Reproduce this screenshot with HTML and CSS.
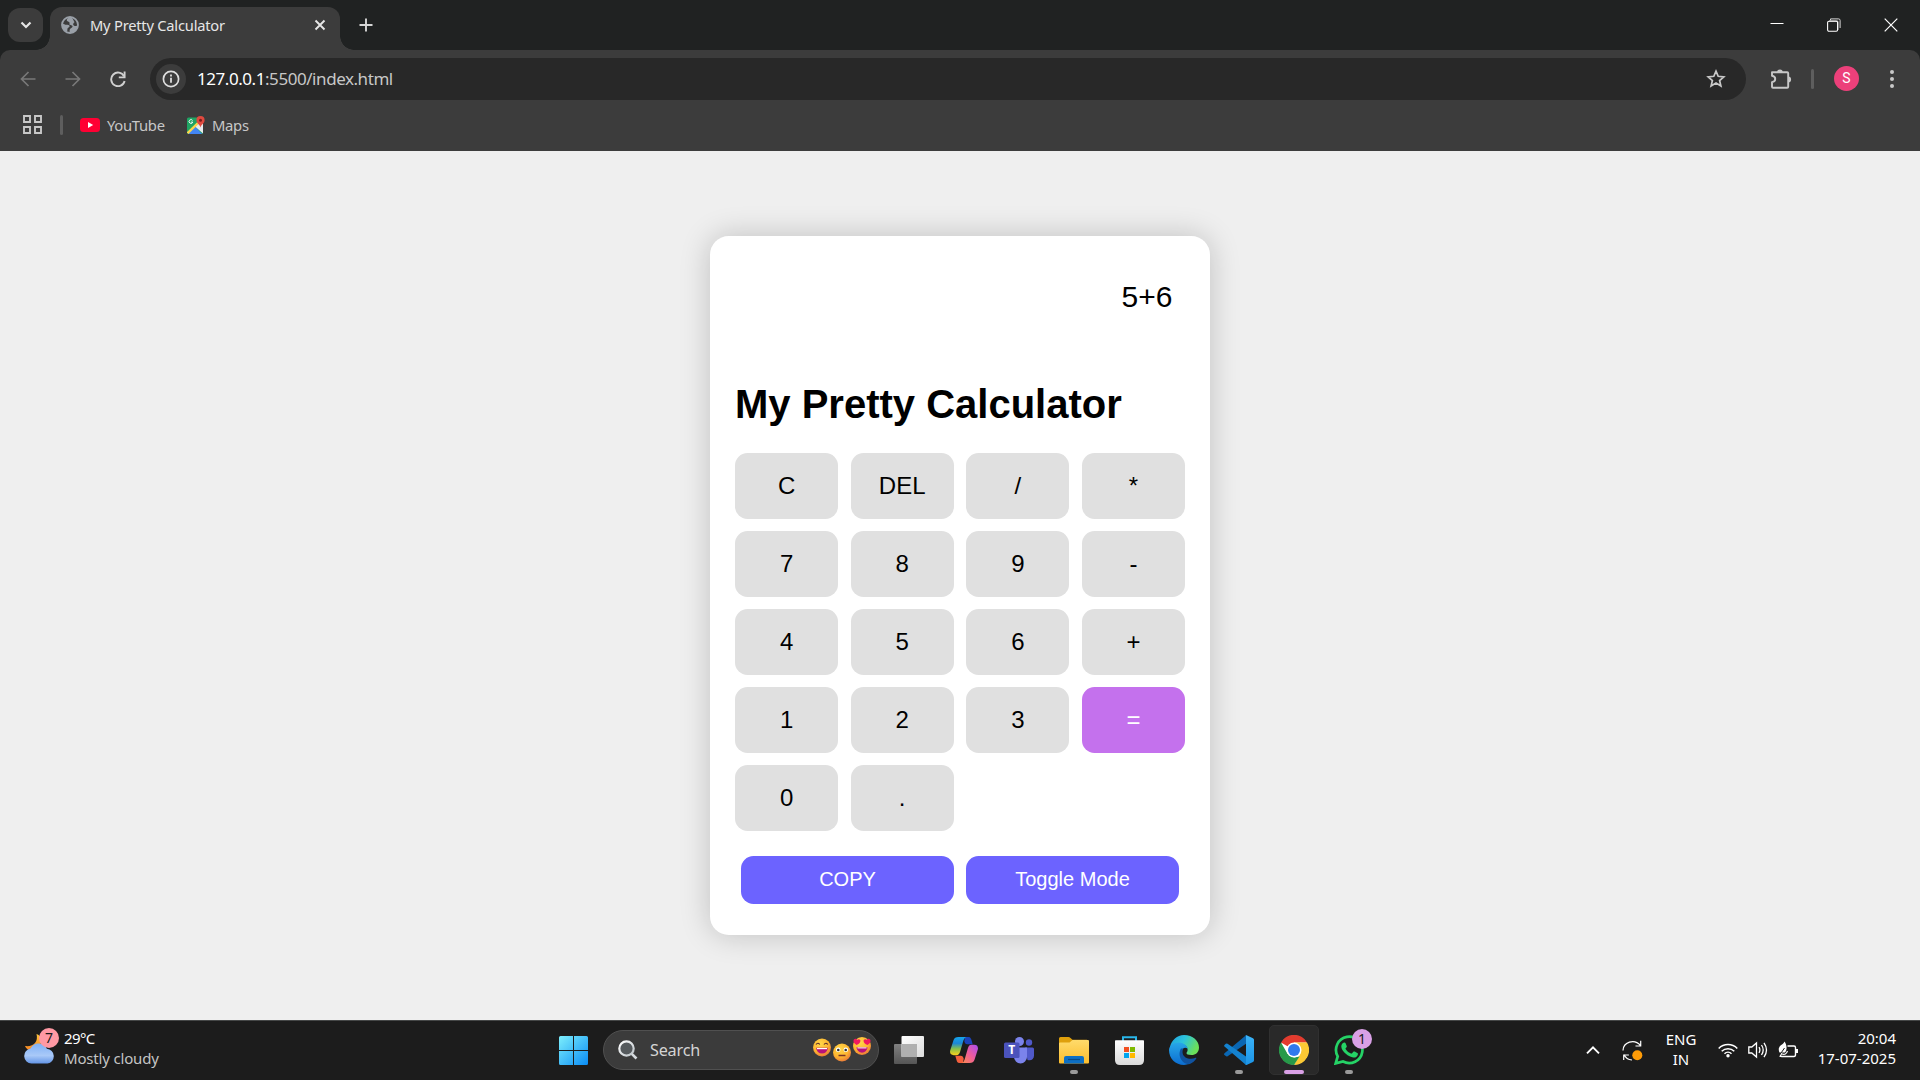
FILE: index.html
```html
<!DOCTYPE html>
<html lang="en">
<head>
<meta charset="utf-8">
<title>My Pretty Calculator</title>
<link rel="stylesheet" href="styles.css">
</head>
<body>
<svg class="defs" width="0" height="0" aria-hidden="true">
  <defs>
    <linearGradient id="g-win" x1="0" y1="0" x2="1" y2="1"><stop offset="0" stop-color="#7deffc"/><stop offset="1" stop-color="#0a8cf5"/></linearGradient>
    <linearGradient id="g-moon" x1="0" y1="0" x2="0" y2="1"><stop offset="0" stop-color="#ffc63c"/><stop offset="1" stop-color="#f58220"/></linearGradient>
    <linearGradient id="g-cloud" x1="0" y1="0" x2="0" y2="1"><stop offset="0" stop-color="#7fb0f5"/><stop offset=".6" stop-color="#a9c9f8"/><stop offset="1" stop-color="#6495e6"/></linearGradient>
    <radialGradient id="g-face" cx=".4" cy=".3" r=".75"><stop offset="0" stop-color="#ffd84a"/><stop offset=".6" stop-color="#fdb52f"/><stop offset="1" stop-color="#e8743b"/></radialGradient>
    <linearGradient id="g-tv1" x1="0" y1="0" x2="1" y2="1"><stop offset="0" stop-color="#fff"/><stop offset="1" stop-color="#dcdcdc"/></linearGradient>
    <linearGradient id="g-tv2" x1="0" y1="0" x2="0" y2="1"><stop offset="0" stop-color="#808080"/><stop offset="1" stop-color="#555"/></linearGradient>
    <linearGradient id="g-cop1" x1="0" y1="0" x2="0" y2="1"><stop offset="0" stop-color="#16a5ec"/><stop offset=".35" stop-color="#1b86d6"/><stop offset=".65" stop-color="#86c04a"/><stop offset="1" stop-color="#fbd21c"/></linearGradient>
    <linearGradient id="g-cop2" x1="1" y1="0" x2="0" y2="1"><stop offset="0" stop-color="#a94df2"/><stop offset=".5" stop-color="#ee5c9c"/><stop offset="1" stop-color="#fd8b4a"/></linearGradient>
    <linearGradient id="g-fold" x1="0" y1="0" x2="0" y2="1"><stop offset="0" stop-color="#ffdb6b"/><stop offset="1" stop-color="#fbbd2e"/></linearGradient>
    <linearGradient id="g-store" x1="0" y1="0" x2="0" y2="1"><stop offset="0" stop-color="#fff"/><stop offset="1" stop-color="#dadada"/></linearGradient>
    <linearGradient id="g-edge1" x1="0" y1="0" x2="1" y2=".4"><stop offset="0" stop-color="#1f9fe0"/><stop offset=".5" stop-color="#2cc3dc"/><stop offset="1" stop-color="#6be05a"/></linearGradient>
    <linearGradient id="g-edge2" x1="0" y1="0" x2="0" y2="1"><stop offset="0" stop-color="#27a7e8"/><stop offset="1" stop-color="#0c6dd0"/></linearGradient>
    <linearGradient id="g-vs" x1="0" y1="0" x2="0" y2="1"><stop offset="0" stop-color="#3bb4f8"/><stop offset="1" stop-color="#1c94e6"/></linearGradient>
    <linearGradient id="g-lens" x1="0" y1="0" x2="1" y2="1"><stop offset="0" stop-color="#fff"/><stop offset="1" stop-color="#bcc3c8"/></linearGradient>
  </defs>
</svg>

<div class="screen">
  <header class="browser">
    <div class="tabstrip">
      <div class="tab-search"><svg width="12" height="8" viewBox="0 0 12 8"><path d="M1.5 1.5 6 6l4.500-4.500" fill="none" stroke="#e6e6e6" stroke-width="2.200"/></svg></div>
      <div class="tab">
        <svg class="favicon" width="18" height="18" viewBox="0 0 18 18"><circle cx="9" cy="9" r="8" fill="#3c3c3c" stroke="#9aa0a8" stroke-width="1.800"/><path d="M1 8c1.500-.2 3 .6 4.200.8 1.600.2 3.400 0 3.400 1.400 0 1-1 1.200-1.700 1.700-.8.600-.2 1.700-.8 3.900C3 14.800.8 12 1 8zM9.500 1C7.500 1.600 5.800 2.700 5.700 4c0 1.600 2.600 1.400 2.900 2.700.2.700-.3 1-.3 1.500 0 .8 2.700.6 3.200 1.900.4 1.300-1 1.900-2 2.500-1 .7-1 2-.8 4.400 4.400.3 8-3.400 8.300-7.400-1.500.6-3 .8-4.200-.1-1.500-1.200-.2-2.600.9-3.500C12.500 5.500 12.500 2 9.500 1z" fill="#9aa0a8"/></svg>
        <span class="tab-title">My Pretty Calculator</span>
        <svg class="tab-close" width="12" height="12" viewBox="0 0 12 12"><path d="M1.500 1.500l9 9m0-9l-9 9" stroke="#e6e6e6" stroke-width="1.900"/></svg>
      </div>
      <svg class="new-tab" width="14" height="14" viewBox="0 0 14 14"><path d="M7 .5v13M.5 7h13" stroke="#d6d6d6" stroke-width="1.900"/></svg>
      <div class="window-buttons">
        <svg width="14" height="14" viewBox="0 0 14 14"><path d="M.5 5.500h13" stroke="#fff"/></svg>
        <svg width="14" height="14" viewBox="0 0 14 14"><path d="M3.500 2.500V.9h8.100q1.500 0 1.500 1.500v7.600" fill="none" stroke="#d8d8d8"/><path d="M2 3h7.800q1 0 1 1v8" fill="none" stroke="#949494" stroke-width="1.500"/><rect x=".6" y="3.200" width="10" height="10" rx="1.400" fill="none" stroke="#fff" stroke-width="1.100"/></svg>
        <svg width="14" height="14" viewBox="0 0 14 14"><path d="M.7.7l12.600 12.600m0-12.600L.7 13.300" stroke="#fff" stroke-width="1.200"/></svg>
      </div>
    </div>

    <div class="toolbar">
      <nav class="nav">
        <svg width="16" height="16" viewBox="0 0 16 16"><path d="M15.500 8H2M8.500 1L1.500 8l7 7" fill="none" stroke="#787878" stroke-width="1.700"/></svg>
        <svg width="16" height="16" viewBox="0 0 16 16"><path d="M.5 8H14M7.500 1l7 7-7 7" fill="none" stroke="#787878" stroke-width="1.700"/></svg>
        <svg width="16" height="16" viewBox="0 0 16 16"><path d="M14 5.200A6.800 6.800 0 1 0 14.600 10" fill="none" stroke="#d0d0d0" stroke-width="1.900"/><path d="M14.600.5v5.900H8.800" fill="none" stroke="#d0d0d0" stroke-width="1.900"/></svg>
      </nav>
      <div class="omnibox">
        <span class="site-info"><svg width="18" height="18" viewBox="0 0 18 18"><circle cx="9" cy="9" r="7.600" fill="none" stroke="#dedede" stroke-width="1.700"/><path d="M9 7.800v5M9 4.600v1.900" stroke="#dedede" stroke-width="1.800"/></svg></span>
        <span class="url"><b>127.0.0.1</b>:5500/index.html</span>
        <svg class="star" width="20" height="20" viewBox="0 0 20 20"><path d="M10 2.200l2.200 5.100 5.600.5-4.200 3.700 1.300 5.500-4.900-2.900L5.100 17l1.300-5.500-4.200-3.700 5.600-.5z" fill="none" stroke="#c8c8c8" stroke-width="1.700"/></svg>
      </div>
      <svg class="puzzle" width="22" height="22" viewBox="0 0 22 22"><path d="M2 4.300h15.200q1 0 1 1v13.500q0 1-1 1H3q-1 0-1-1v-4.700c4.300-.8 4.300-5.500 0-6.300V4.300z" fill="none" stroke="#c8c8c8" stroke-width="1.900" stroke-linejoin="round"/><path d="M7 4.300a2.900 2.900 0 0 1 5.800 0zM18.200 8.600a2.900 2.900 0 0 1 0 5.800z" fill="#c8c8c8"/></svg>
      <span class="divider"></span>
      <span class="avatar">S</span>
      <svg class="menu" width="4" height="18" viewBox="0 0 4 18"><g fill="#c8c8c8"><circle cx="2" cy="2" r="2"/><circle cx="2" cy="9" r="2"/><circle cx="2" cy="16" r="2"/></g></svg>
    </div>

    <div class="bookmarks">
      <svg width="19" height="19" viewBox="0 0 19 19"><path d="M1 1h6v6H1zM12 1h6v6h-6zM1 12h6v6H1zM12 12h6v6h-6z" fill="none" stroke="#c8c8c8" stroke-width="1.900"/></svg>
      <span class="divider"></span>
      <span class="bookmark"><svg width="20" height="14" viewBox="0 0 20 14"><rect width="20" height="14" rx="3.500" fill="#ff0033"/><path d="M8 4l5.200 3L8 10z" fill="#fff"/></svg><span class="label-yt">YouTube</span></span>
      <span class="bookmark maps"><svg width="18" height="18" viewBox="0 0 18 18"><rect y="1.500" width="16" height="16.500" rx="1.500" fill="#1fa463"/><path d="M1 18l7-7.500 7 7.500z" fill="#4285f4"/><path d="M8 10.500L16 3v14.500z" fill="#e8eaed"/><path d="M.6 17.200L12 6" stroke="#fbd64b" stroke-width="2.400"/><path d="M5.600 4.500a1.900 1.900 0 1 0 .2 1.600H4" fill="none" stroke="#fff" stroke-width=".9"/><path d="M13.500 11.500C12.500 8 9.400 7.300 9.400 4.200a4.100 4.100 0 0 1 8.200 0c0 3.100-3.100 3.800-4.100 7.300z" fill="#e04a3f"/><circle cx="13.500" cy="4.200" r="1.500" fill="#7b1d1d"/></svg><span class="label-maps">Maps</span></span>
    </div>
  </header>

  <main class="page">
    <section class="calculator">
      <output class="display">5+6</output>
      <h1>My Pretty Calculator</h1>
      <div class="keys">
        <button>C</button><button>DEL</button><button>/</button><button>*</button>
        <button>7</button><button>8</button><button>9</button><button>-</button>
        <button>4</button><button>5</button><button>6</button><button>+</button>
        <button>1</button><button>2</button><button>3</button><button class="equals">=</button>
        <button>0</button><button>.</button>
      </div>
      <div class="actions"><button>COPY</button><button>Toggle Mode</button></div>
    </section>
  </main>

  <footer class="taskbar">
    <div class="weather">
      <div class="weather-icon">
        <svg width="34" height="37" viewBox="0 0 34 37"><path d="M12.500 6c2 8-3 13-11.500 12 1 3 4 5 8 4.500 6-1 9-6 8-12-.5-2-2-4-4.500-4.500z" fill="url(#g-moon)"/><path d="M7.500 35.500a7.500 7.500 0 0 1-1-14.900 9 9 0 0 1 16.400.2 7.400 7.400 0 0 1 .6 14.700z" fill="url(#g-cloud)"/></svg>
        <span class="badge pink">7</span>
      </div>
      <div class="weather-text"><span class="temp">29°C</span><span class="sky">Mostly cloudy</span></div>
    </div>

    <div class="apps">
      <div class="app"><svg width="29" height="29" viewBox="0 0 29 29"><path d="M0 1.500Q0 0 1.500 0H14v14H0zM15 0h12.500Q29 0 29 1.500V14H15zM0 15h14v14H1.500Q0 29 0 27.500zM15 15h14v12.500q0 1.500-1.500 1.500H15z" fill="url(#g-win)"/></svg></div>
      <div class="search">
        <svg width="20" height="20" viewBox="0 0 20 20"><circle cx="8.500" cy="8.500" r="7.200" fill="#555a5d" stroke="url(#g-lens)" stroke-width="2.200"/><path d="M13.800 13.800l4.700 4.700" stroke="#d5dade" stroke-width="2.600"/></svg>
        <span class="search-label">Search</span>
        <svg class="faces" width="60" height="26" viewBox="0 0 60 26">
          <circle cx="10" cy="10.500" r="9" fill="url(#g-face)"/><path d="M4 7.500q1.800-2.500 3.800 0M12 7.500q1.800-2.500 3.800 0" fill="none" stroke="#5b2b2b" stroke-width="1.200"/><path d="M4.200 10.800h11.600a5.800 5.800 0 0 1-11.600 0z" fill="#b8127b"/><path d="M5 11h10v1.200H5z" fill="#fff"/>
          <circle cx="30" cy="15.500" r="9" fill="url(#g-face)"/><circle cx="26.200" cy="12.800" r="2.300" fill="#fff"/><circle cx="33.800" cy="12.800" r="2.300" fill="#fff"/><circle cx="26.300" cy="13" r="1.300" fill="#333"/><circle cx="33.700" cy="13" r="1.300" fill="#333"/><path d="M26.500 18.500h7" stroke="#7a3325" stroke-width="1.500"/>
          <circle cx="50" cy="9" r="9" fill="url(#g-face)"/><path d="M44.500 8C41.500 6 41 4.300 41.700 2.800c1-1.800 3-1.300 3.400.2 1-1.200 3.100-.8 3.300.8.200 1.800-1.600 3.400-3.900 4.200zM55.500 8c3-2 3.500-3.700 2.800-5.200-1-1.800-3-1.300-3.400.2-1-1.200-3.100-.8-3.300.8-.2 1.800 1.600 3.400 3.900 4.200z" fill="#f0195f"/><path d="M44.500 10.200h11a5.500 5.500 0 0 1-11 0z" fill="#b8127b"/><path d="M45.500 10.400h9v1h-9z" fill="#fff"/>
        </svg>
      </div>
      <div class="app"><svg width="30" height="28" viewBox="0 0 30 28"><rect y="8" width="23" height="20" rx="1" fill="url(#g-tv2)"/><rect x="7.500" y="0" width="22.500" height="21" rx="1" fill="url(#g-tv1)"/><path d="M7.500 8H23v13H7.500z" fill="#b0b0b0"/></svg></div>
      <div class="app"><svg width="28" height="26" viewBox="0 0 28 26"><path d="M15 0h3.500c2.200 0 2.600 1.800 3.200 3.800l1 3.400h-5.400c-1.800 0-2.500-1.200-3-3z" fill="#1b43b8"/><path d="M8.500 0h8c-2 .4-2.800 2.500-3.400 4.600l-3 10.200c-.7 2.300-1.700 3.400-3.800 3.400H3.800C1 18.200-.5 16.500.2 13.500L3.500 3.300C4.300 1 5.700 0 8.500 0z" fill="url(#g-cop1)"/><path d="M13 26H9.500c-2.200 0-2.600-1.800-3.200-3.800l-1-3.400h5.400c1.800 0 2.500 1.200 3 3z" fill="#f35f3d"/><path d="M19.500 26h-8c2-.4 2.800-2.500 3.400-4.600l3-10.200c.7-2.300 1.700-3.400 3.800-3.400h2.500c2.800 0 4.300 1.700 3.600 4.700l-3.300 10.200c-.8 2.300-2.200 3.300-5 3.300z" fill="url(#g-cop2)"/></svg></div>
      <div class="app"><svg width="30" height="27" viewBox="0 0 30 27"><circle cx="25" cy="5.500" r="3.200" fill="#5059c9"/><path d="M21 10.500h7.500q1.500 0 1.500 1.500v6.500c0 4-3 5.500-6.500 4.500z" fill="#5059c9"/><circle cx="15.500" cy="4.500" r="4.500" fill="#7b83eb"/><path d="M10 10.500h13v9.500a6.500 6.500 0 0 1-13 0z" fill="#7b83eb"/><rect y="5.500" width="15.500" height="15.500" rx="1.500" fill="#4b53bc"/><text x="7.700" y="17.300" class="teams-t">T</text></svg></div>
      <div class="app running"><svg width="30" height="27" viewBox="0 0 30 27"><path d="M0 1.500Q0 0 1.500 0h8q1 0 2 1l2 1.800H28L30 6v5H0z" fill="#dfa00c"/><path d="M0 6.500Q0 5.500 1 5.500h9.500l3-2.500H29q1 0 1 1v21.500q0 1-1 1H1q-1 0-1-1z" fill="url(#g-fold)"/><path d="M5 26.500V21q0-2 2-2h16q2 0 2 2v5.500z" fill="#0d6fc4"/><path d="M9 22.500h12" stroke="#084a88" stroke-width="1.200"/></svg></div>
      <div class="app"><svg width="29" height="29" viewBox="0 0 29 29"><path d="M8 6V1.200h13V6" fill="none" stroke="#29b6ea" stroke-width="2"/><path d="M0 5q0-.7.700-.7h27.600q.7 0 .7.700v19q0 5-5 5H5q-5 0-5-5z" fill="url(#g-store)"/><path d="M9 11h5v5H9z" fill="#f25022"/><path d="M15 11h5v5h-5z" fill="#7fba00"/><path d="M9 17h5v5H9z" fill="#00a4ef"/><path d="M15 17h5v5h-5z" fill="#ffb900"/></svg></div>
      <div class="app"><svg width="30" height="30" viewBox="0 0 30 30"><path d="M1 12C2.500 5 8 0 15 0c9 0 15 6 15 12.500 0 5-3.500 7.500-7.500 7.500-3.500 0-5.300-1-5-2.300.3-.8 1.500-1.500 1-4C18 11 15 9 11 9c-5 0-8.500 2-10 5z" fill="url(#g-edge1)"/><path d="M0 15c0-4.500 4.500-7.500 9.500-7.500 5 0 9 3 9.200 6.500-2-2.500-6.200-1-6.200 3.500 0 6 7 9.500 12.500 8A15 15 0 0 1 15 30C6.500 30 0 23.500 0 15z" fill="url(#g-edge2)"/><path d="M12 13.500c-4 7 1 15.500 8 15.700 3-1 6-3.200 7.300-5.800.3-.6-.3-.9-.8-.6-5.500 2.500-11.800.2-12.800-4.300-.4-1.800 0-3.700.7-5z" fill="#1053a0"/></svg></div>
      <div class="app running"><svg width="30" height="30" viewBox="0 0 30 30"><path d="M.5 18.300L22 .2V8.700L3.600 21.200q-1 .7-1.800-.1L.5 20q-.9-.9 0-1.700z" fill="#0a67b3"/><path d="M.5 11.500q-.8-.8 0-1.600l1.300-1.100q.8-.7 1.800 0L22 21.500V30z" fill="#1482cf"/><path d="M21.500.2Q22 0 22.500.2L29 3.200q1 .5 1 1.600v20.500q0 1.100-1 1.600L22.500 30q-.7.200-1.200-.3.700.3.700-.7V1q0-1-.5-.8z" fill="url(#g-vs)"/></svg></div>
      <div class="app active"><svg width="30" height="30" viewBox="0 0 30 30"><circle cx="15" cy="15" r="14.500" fill="#fff"/><path d="M15 15L2 7.500A15 15 0 0 1 28 7.500H15z" fill="#e33b2e"/><path d="M15 7.500h13A15 15 0 0 1 15 30l6.500-11.200z" fill="#fcc934"/><path d="M2 7.500l6.500 11.300L15 22.500l5.500-1L15 30A15 15 0 0 1 2 7.500z" fill="#279a49"/><circle cx="15" cy="15" r="7.500" fill="#fff"/><circle cx="15" cy="15" r="6" fill="#3079ed"/></svg></div>
      <div class="app running whatsapp"><svg width="30" height="30" viewBox="0 0 30 30"><path d="M1.700 28.400l2-7.100A13.200 13.200 0 1 1 9 26.500z" fill="none" stroke="#25d366" stroke-width="2.700"/><path d="M10.200 7.500c.7 0 1.200.2 1.500.9l1 2.500c.3.700 0 1.200-.9 2.200-.4.500-.3.800.1 1.400 1.300 2 3 3.200 5.100 4 .6.200.9.100 1.300-.4l1-1.300c.4-.5.9-.5 1.400-.2l2.600 1.300c.5.300.8.500.7 1-.4 2.700-2.500 3.800-4.700 3.600-4.500-.5-11.500-5.500-12-10.700-.1-2 1.100-4.300 2.900-4.300z" fill="#25d366"/></svg><span class="badge lilac">1</span></div>
    </div>

    <div class="tray">
      <svg class="chevron" width="14" height="10" viewBox="0 0 14 10"><path d="M1 8.300l6-6 6 6" fill="none" stroke="#fff" stroke-width="1.900"/></svg>
      <svg class="update" width="21" height="21" viewBox="0 0 21 21"><path d="M1 10.500C1.200 2.500 12-2 18.500 5.500M18.700.8v5.200h-5.200M10 20C6.500 19.800 3.500 18 2 14.500M1.700 20v-5h5.200" fill="none" stroke="#fff" stroke-width="1.200"/><circle cx="15.300" cy="15.300" r="5" fill="#ff9c07"/></svg>
      <div class="lang"><span>ENG</span><span>IN</span></div>
      <div class="status">
        <svg width="20" height="16" viewBox="0 0 20 16"><g fill="none" stroke="#fff" stroke-width="1.500"><path d="M.7 6.500a13 13 0 0 1 18.600 0"/><path d="M3.700 9.200a9 9 0 0 1 12.600 0"/><path d="M6.500 11.700a5 5 0 0 1 7 0"/></g><circle cx="10" cy="13.800" r="1.700" fill="#fff"/></svg>
        <svg width="20" height="18" viewBox="0 0 20 18"><g fill="none" stroke="#fff" stroke-width="1.300"><path d="M.8 6h3L8.500 2v14l-4.700-4h-3z"/><path d="M11 6.200q1.800 2.800 0 5.600M13.500 4q3.400 5 0 10M16 1.800q5 7.200 0 14.400"/></g></svg>
        <svg width="20" height="18" viewBox="0 0 20 18"><path d="M9.500 5H16q1.500 0 1.500 1.500v7q0 2-1.500 2H4q-1.500 0-2.500-1" fill="none" stroke="#fff" stroke-width="1.400"/><path d="M18 8h2v4h-2z" fill="#fff"/><path d="M6.500.5c2 2.500 3.200 7.500.5 11H1.500C-.5 7 2 4.500 4 3.500 5.500 2.500 6 1.500 6.500.5z" fill="#fff"/><path d="M1 15L6.500 7" stroke="#1c1c1c" stroke-width="1"/><path d="M2 15.500l2-3.500M4 13q4 1.500 5.500-3" stroke="#fff" stroke-width="1.100" fill="none"/></svg>
      </div>
      <div class="clock"><span class="time">20:04</span><span class="date">17-07-2025</span></div>
    </div>
  </footer>
</div>
</body>
</html>
```
FILE: styles.css
```css
* { box-sizing: border-box; }
body { margin: 0; font-family: "Noto Sans", "Open Sans", sans-serif; overflow: hidden; }
svg { display: block; flex: none; }
.defs { position: absolute; }
.screen { width: 1920px; height: 1080px; display: flex; flex-direction: column; }
span { white-space: nowrap; }

/* Browser window */
.browser { height: 151px; background: linear-gradient(#202222 60px, #3c3c3c 60px); }
.tabstrip { height: 50px; display: flex; align-items: flex-start; padding: 8px 22px 0 8px; }
.tab-search { width: 35px; height: 34px; border-radius: 12px; background: #3c3c3c; display: flex; align-items: center; justify-content: center; }
.tab { position: relative; width: 290px; height: 43px; margin: -1px 0 0 7px; padding: 0 14px 8px 11px; border-radius: 12px 12px 0 0; background: #3c3c3c; display: flex; align-items: center; }
.tab::before, .tab::after { content: ""; position: absolute; bottom: 0; width: 14px; height: 14px; }
.tab::before { left: -14px; background: radial-gradient(circle at 0 0, transparent 13.500px, #3c3c3c 14px); }
.tab::after { right: -14px; background: radial-gradient(circle at 100% 0, transparent 13.500px, #3c3c3c 14px); }
.tab-title { margin-left: 11px; font-size: 14.700px; line-height: 20px; letter-spacing: -.22px; color: #e6e6e6; flex: 1; }
.new-tab { margin: 10px 0 0 19px; }
.window-buttons { margin: 10px 0 0 auto; display: flex; gap: 43px; }

.toolbar { height: 51px; padding: 7px 26px 1px 20px; border-radius: 10px 10px 0 0; background: #3c3c3c; display: flex; align-items: center; }
.nav { display: flex; gap: 29px; width: 130px; }
.omnibox { width: 1597px; height: 42px; padding: 0 20px 0 6px; border-radius: 21px; background: #282828; display: flex; align-items: center; }
.site-info { width: 30px; height: 30px; border-radius: 50%; background: #3c3c3c; display: flex; align-items: center; justify-content: center; }
.url { margin-left: 11px; flex: 1; font-size: 17px; letter-spacing: -.44px; color: #c7c7c7; }
.url b { font-weight: 400; color: #fff; }
.puzzle { margin-left: 24px; }
.divider { width: 3px; height: 20px; border-radius: 2px; background: #5e5e5e; }
.toolbar .divider { margin-left: 19px; }
.avatar { width: 25px; height: 25px; margin-left: 20px; border-radius: 50%; background: #ec407a; color: #fff; font: 14px/25px Roboto, sans-serif; text-align: center; }
.menu { margin-left: 31px; }

.bookmarks { height: 50px; padding: 0 0 3px 23px; display: flex; align-items: center; font-size: 14.800px; color: #c7c7c7; background: #3c3c3c; }
.bookmarks .divider { margin: 0 17px 0 18px; }
.bookmark { display: flex; align-items: center; }
.bookmark svg + span { margin-left: 7px; }
.maps { margin-left: 22px; }
.label-yt { width: 58px; letter-spacing: -.3px; }
.label-maps { letter-spacing: -.3px; }

/* Calculator page */
.page { height: 869px; background: #efefef; display: flex; align-items: center; justify-content: center; font-family: "Liberation Sans", Arial, sans-serif; }
.calculator { width: 500px; height: 699px; padding: 25px; border-radius: 18.750px; background: #fff; box-shadow: 0 0 31.250px rgba(0, 0, 0, .2); }
.display { display: block; height: 100px; padding: 18px 12.500px; font-size: 30px; line-height: 35px; text-align: right; }
h1 { margin: 21px 0 26px; font-size: 40px; line-height: 45px; }
.keys { display: grid; grid-template-columns: repeat(4, 1fr); gap: 12px 12.500px; }
button { border: 0; padding: 0; font-family: inherit; }
.keys button { height: 66px; border-radius: 12.500px; background: #e0e0e0; color: #000; font-size: 24px; }
.keys .equals { background: #c471ed; color: #fff; }
.actions { display: flex; gap: 12.500px; margin: 25px 6.250px 0; }
.actions button { flex: 1; height: 48px; padding-bottom: 2px; border-radius: 12.500px; background: #6c63ff; color: #fff; font-size: 20px; }

/* Taskbar */
.taskbar { height: 60px; border-top: 1px solid #454747; background: #1c1c1c; color: #fff; display: flex; align-items: center; padding: 0 24px 1px 24px; font-size: 15px; }
.weather { display: flex; width: 524px; margin-top: -4px; }
.weather-icon { position: relative; width: 34px; height: 37px; }
.badge { position: absolute; width: 20px; height: 20px; border-radius: 50%; color: #1b1b1b; font-size: 14px; line-height: 20px; text-align: center; }
.pink { left: 15px; top: 0; background: #ff99a4; }
.lilac { left: 28px; top: 4px; background: #d9a0e6; }
.weather-text, .lang, .clock { display: flex; flex-direction: column; line-height: 20px; }
.weather-text { margin-left: 6px; }
.temp { letter-spacing: -.6px; }
.sky { color: #c4c4c4; font-size: 15px; letter-spacing: -.18px; }
.apps { display: flex; gap: 5px; align-items: center; }
.app { position: relative; width: 50px; height: 50px; border-radius: 5px; display: flex; align-items: center; justify-content: center; }
.running::after, .active::after { content: ""; position: absolute; bottom: 1px; left: 21px; width: 8px; height: 4px; border-radius: 2px; background: #9a9a9a; }
.active { background: #292929; border: 1px solid #303030; }
.active::after { left: 14px; bottom: 0; width: 20px; background: #d9a0e6; }
.teams-t { font: bold 12px "Open Sans", sans-serif; fill: #fff; text-anchor: middle; }
.search { width: 276px; height: 40px; padding: 0 6px 0 14px; border: 1px solid #505050; border-radius: 20px; background: #3b3b3b; display: flex; align-items: center; }
.search-label { flex: 1; margin-left: 12px; font-size: 16.200px; letter-spacing: -.2px; color: #d4d4d4; }
.tray { flex: 1; display: flex; align-items: center; }
.chevron { margin-left: 212px; }
.update { margin-left: 22px; }
.lang { width: 50px; margin: -2px 0 0 13px; align-items: center; }
.status { display: flex; align-items: center; gap: 10px; margin-left: 12px; }
.clock { margin: -4px 0 0 auto; align-items: flex-end; }
```
